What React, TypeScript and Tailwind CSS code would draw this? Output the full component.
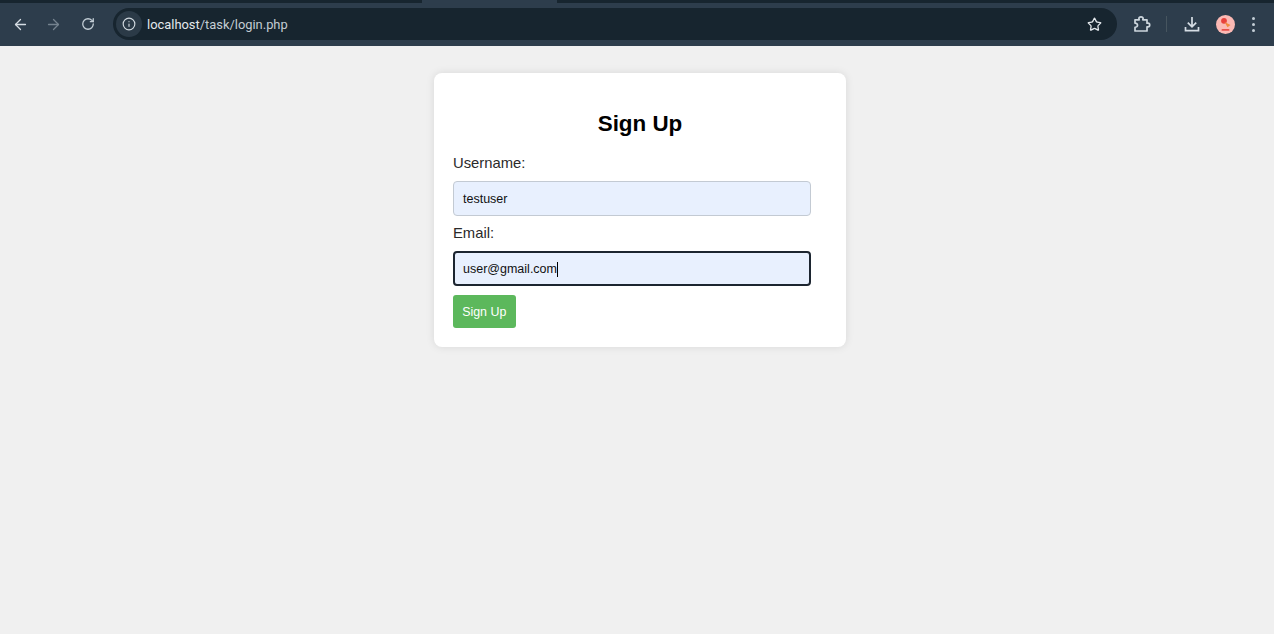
import { ArrowLeft, ArrowRight, RotateCw, Info, Star } from "lucide-react";

function Puzzle() {
  return (
    <svg width="18" height="18" viewBox="0 0 18 18" fill="none" stroke="#cdd6dd" strokeWidth="1.7" strokeLinejoin="round">
      <path d="M2 16V12.300c1.500 0 2.500-.9 2.500-2.100S3.500 8.100 2 8.100V4.800h4.200c-.2-.5-.3-.9-.3-1.300C5.900 2.500 6.800 1.800 8 1.800s2.100.7 2.100 1.700c0 .4-.1.8-.3 1.300H14v3.400h1c1 0 1.700.8 1.700 1.800s-.7 1.800-1.700 1.800h-1V16z" />
    </svg>
  );
}

function DownloadIcon() {
  return (
    <svg width="18" height="18" viewBox="0 0 18 18" fill="none" stroke="#d5dde4" strokeWidth="1.7">
      <path d="M9 2v9.500M4.800 7.600 9 11.800l4.200-4.200" />
      <path d="M2.500 12v3.700h13V12" />
    </svg>
  );
}

function Avatar() {
  return (
    <svg width="19" height="19" viewBox="0 0 19 19">
      <circle cx="9.500" cy="9.500" r="9.500" fill="#fbb9b4" />
      <circle cx="8" cy="5.800" r="2.900" fill="#e8413c" />
      <path d="M8.500 7l6 3-3 2.200z" fill="#f08a3c" />
      <rect x="5.500" y="14" width="8" height="1.800" rx=".9" fill="#e8514c" />
    </svg>
  );
}

function Field({ label, value, focused }: { label: string; value: string; focused?: boolean }) {
  return (
    <div>
      <div className="text-[14.8px] leading-[18px] text-[#2a2a2a] mb-[9px]">{label}</div>
      <div
        className={
          focused
            ? "w-[358px] h-[35px] flex items-center pl-[8px] pt-[1px] rounded-[4px] bg-[#e8f0fe] border-2 border-[#1c2530] text-[12.5px] text-[#111]"
            : "w-[358px] h-[35px] flex items-center pl-[9px] pt-[1px] rounded-[4px] bg-[#e8f0fe] border border-[#c3cad3] text-[12.5px] text-[#111]"
        }
      >
        <span>{value}</span>
        {focused && <span className="w-px h-[15px] bg-black" />}
      </div>
    </div>
  );
}

export default function App() {
  return (
    <div className="h-[634px] overflow-hidden bg-[#f0f0f0] font-['Liberation_Sans',Arial,sans-serif]">
      <header className="h-[46px] bg-[#2d3d4c] flex flex-col">
        <div className="h-[3px] bg-[#17252f] flex pl-[422px]">
          <div className="w-[135px] bg-[#2d3d4c]" />
        </div>
        <div className="flex-1 flex items-center pl-[12px] pr-[8px] pb-[1px]">
          <ArrowLeft size={17} color="#d5dde4" strokeWidth={1.8} />
          <ArrowRight size={17} color="#75838f" strokeWidth={1.8} className="ml-[16px]" />
          <RotateCw size={14} color="#c3ced6" strokeWidth={2.2} className="ml-[19px]" />
          <div className="ml-[18px] w-[1004px] h-[32px] rounded-full bg-[#17252f] flex items-center">
            <div className="w-[26px] h-[26px] ml-[3px] rounded-full bg-[#2b3a47] flex items-center justify-center">
              <Info size={14} color="#d0d8de" strokeWidth={2} />
            </div>
            <span className="ml-[5px] pt-[1px] text-[12.9px] font-['Roboto',sans-serif] text-[#e3e8ec]">
              localhost<span className="text-[#c4cdd4]">/task/login.php</span>
            </span>
            <Star size={15} color="#e3e8ec" strokeWidth={2.1} className="ml-auto mr-[15px]" />
          </div>
          <div className="ml-[16px] flex items-center">
            <Puzzle />
          </div>
          <div className="ml-[15px] w-px h-[16px] bg-[#46555f]" />
          <div className="ml-[16px] flex items-center">
            <DownloadIcon />
          </div>
          <div className="ml-[15px] flex items-center">
            <Avatar />
          </div>
          <div className="ml-[17px] flex flex-col gap-[3px]">
            <span className="w-[3px] h-[3px] rounded-full bg-[#c3ced6]" />
            <span className="w-[3px] h-[3px] rounded-full bg-[#c3ced6]" />
            <span className="w-[3px] h-[3px] rounded-full bg-[#c3ced6]" />
          </div>
        </div>
      </header>
      <main className="flex justify-center pt-[27px] pl-[6px]">
        <div className="w-[412px] h-[274px] bg-white rounded-[8px] shadow-[0_0_8px_rgba(0,0,0,0.1)] px-[19px] pt-[38px]">
          <h1 className="text-[22.4px] leading-[26px] font-bold text-black text-center mb-[17px]">Sign Up</h1>
          <div className="flex flex-col gap-[8px]">
            <Field label="Username:" value="testuser" />
            <Field label="Email:" value="user@gmail.com" focused />
          </div>
          <button className="mt-[9px] w-[62.5px] h-[33px] pt-[1px] rounded-[3px] bg-[#5cb85c] text-white text-[12.4px] flex items-center justify-center">
            Sign Up
          </button>
        </div>
      </main>
    </div>
  );
}
